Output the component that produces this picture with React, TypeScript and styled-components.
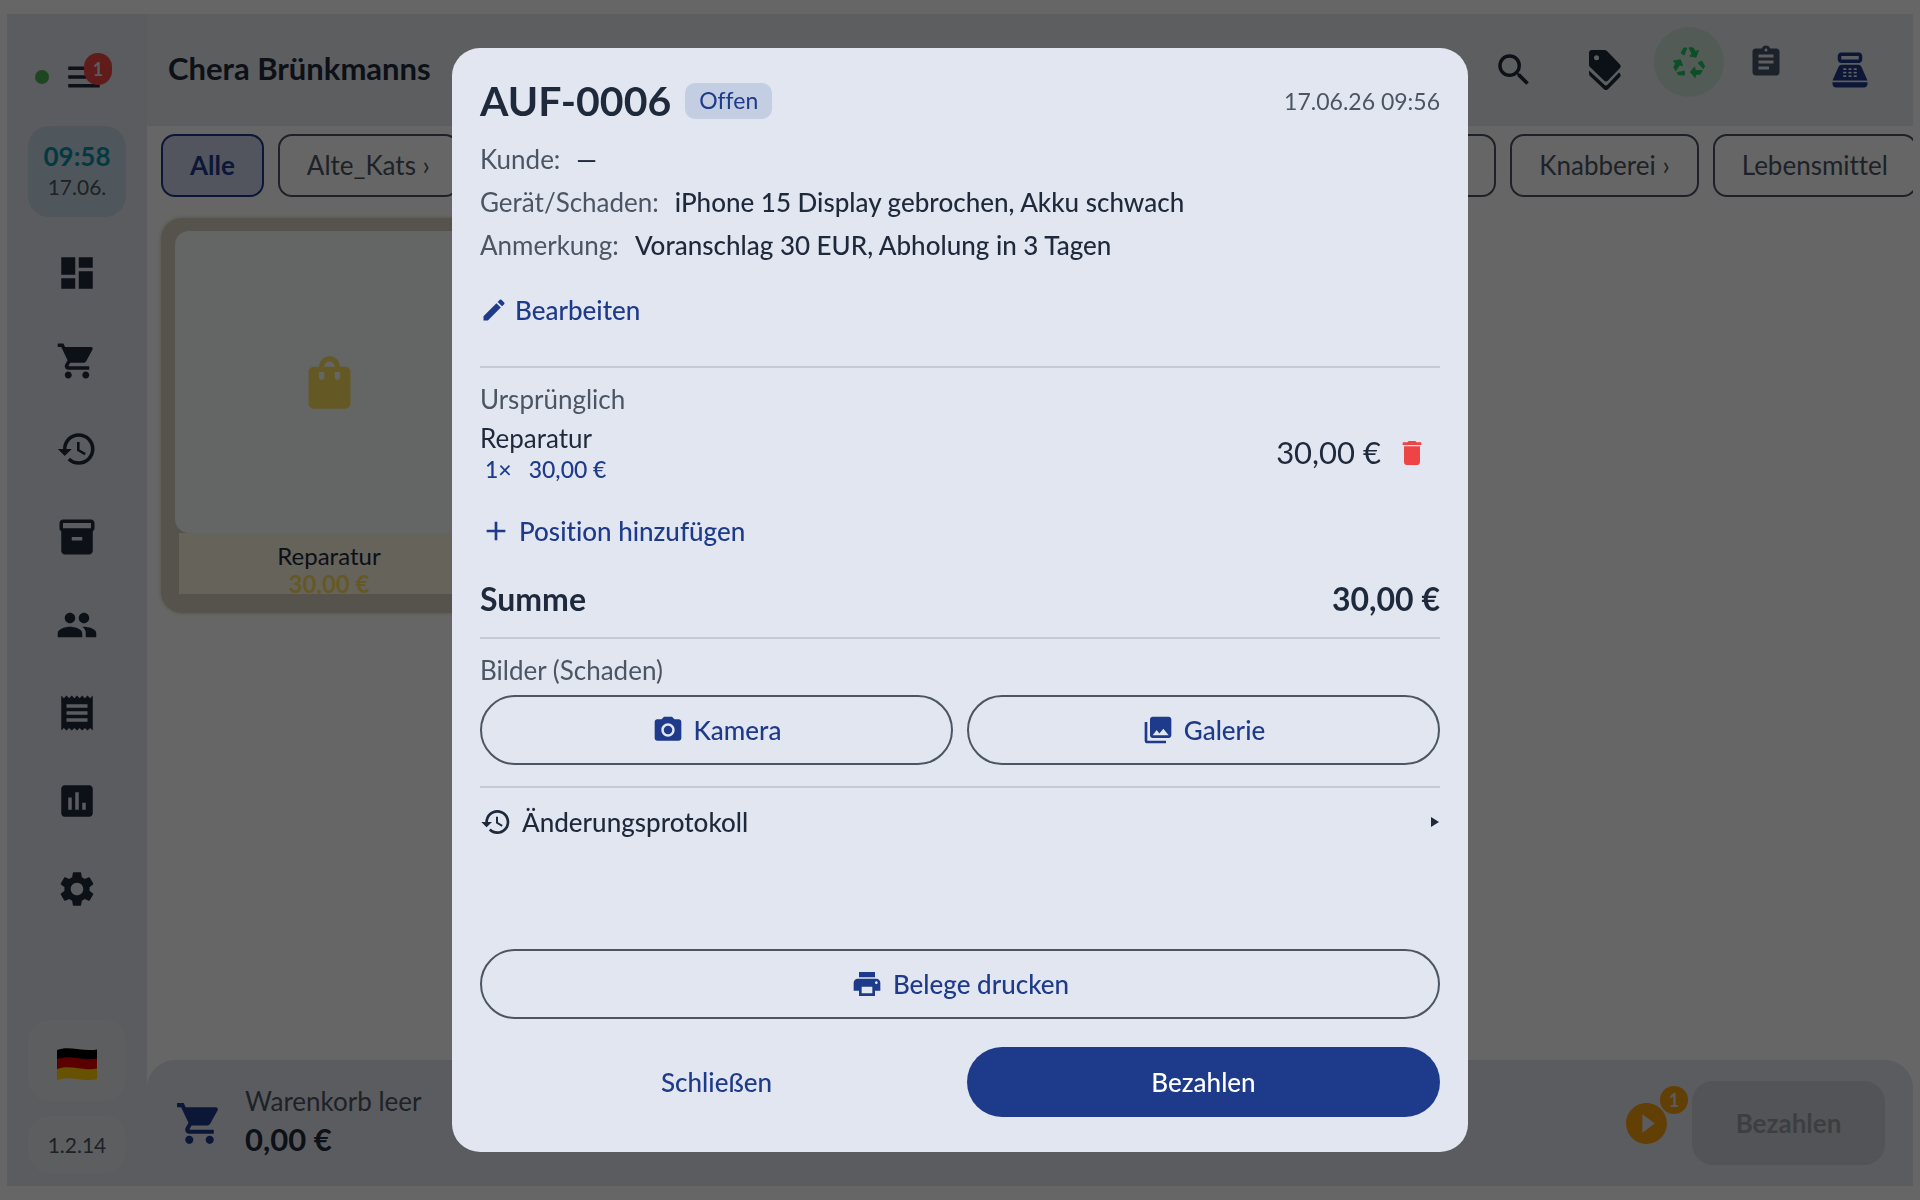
import React from "react";
import styled, { createGlobalStyle } from "styled-components";
import {
  MdAdd, MdAssignment, MdDashboard, MdDelete, MdEdit, MdHistory, MdInsertChart, MdInventory2, MdMenu,
  MdPeople, MdPhotoCamera, MdPhotoLibrary, MdPlayCircleFilled, MdPointOfSale, MdPrint, MdReceipt,
  MdSearch, MdSettings, MdShoppingBag, MdShoppingCart,
} from "react-icons/md";

const c = {
  ink: "#1e293b",
  muted: "#4b5563",
  primary: "#1e3a8a",
  surface: "#e2e6f1",
  rail: "#e3e5ee",
  bar: "#e8eaf0",
  danger: "#ef4444",
  amber: "#f59e0b",
};

const GlobalStyle = createGlobalStyle`
  *, *::before, *::after { box-sizing: border-box; }
  body {
    margin: 0;
    background: #fff;
    color: ${c.ink};
    font-family: Lato, "Open Sans", sans-serif;
    font-size: 26px;
    font-variant-ligatures: none;
  }
  button {
    border: 0;
    margin: 0;
    padding: 0;
    background: none;
    color: inherit;
    font: inherit;
    font-variant-ligatures: none;
    cursor: pointer;
  }
  h1, h2, h3, p, dl, dd, ul { margin: 0; padding: 0; font-weight: inherit; font-size: inherit; }
  svg { display: block; flex: none; }
`;

const Shell = styled.div`
  height: 100vh;
  min-height: 1000px;
  padding: 14px 7px;
  display: flex;
  overflow: hidden;
`;

/* Side rail */
const Rail = styled.nav`
  flex: none;
  width: 140px;
  background: ${c.rail};
  padding: 14px 0 13px;
  display: flex;
  flex-direction: column;
  align-items: center;
`;
const MenuRow = styled.div`
  height: 98px;
  padding-right: 14px;
  display: flex;
  align-items: center;
  gap: 14px;
`;
const OnlineDot = styled.span`
  width: 14px;
  height: 14px;
  border-radius: 50%;
  background: #4caf50;
`;
const BadgeButton = styled.button`
  position: relative;
  display: block;
`;
const Badge = styled.span<{ $tone: string }>`
  position: absolute;
  display: grid;
  place-items: center;
  border-radius: 16px;
  background: ${p => p.$tone};
  color: ${c.rail};
  font-size: 18px;
  font-weight: 700;
`;
const MenuBadge = styled(Badge)`
  top: -3px;
  right: -7px;
  width: 28px;
  height: 32px;
`;
const ParkedBadge = styled(Badge)`
  top: -13px;
  right: -17px;
  width: 28px;
  height: 28px;
`;
const Clock = styled.div`
  width: 98px;
  height: 91px;
  padding-bottom: 4px;
  border-radius: 21px;
  background: #c9dae6;
  display: flex;
  flex-direction: column;
  align-items: center;
  justify-content: center;
  color: ${c.muted};
  font-size: 21px;
  line-height: 28px;
`;
const Time = styled.strong`
  color: #0891a5;
  font-size: 26px;
  line-height: 34px;
`;
const NavList = styled.ul`
  list-style: none;
  margin-top: 12px;
  flex: 1;
`;
const NavButton = styled.button`
  width: 98px;
  height: 88px;
  display: grid;
  place-items: center;
`;
const RailTile = styled.div<{ $h: number }>`
  width: 98px;
  height: ${p => p.$h}px;
  margin-top: 15px;
  border-radius: 21px;
  background: ${c.bar};
  display: grid;
  place-items: center;
  color: ${c.muted};
  font-size: 21px;
`;

/* Main column */
const Main = styled.main`
  flex: 1;
  min-width: 0;
  display: flex;
  flex-direction: column;
`;
const TopBar = styled.header`
  height: 112px;
  padding: 0 21px;
  background: ${c.bar};
  display: flex;
  align-items: center;
  gap: 7px;
`;
const ShopName = styled.h1`
  flex: 1;
  padding-bottom: 4px;
  font-size: 31px;
  font-weight: 700;
`;
const ToolButton = styled.button<{ $blue?: boolean }>`
  width: 84px;
  height: 84px;
  display: grid;
  place-items: center;
  color: ${p => (p.$blue ? c.primary : c.ink)};
`;
const QuickTools = styled.div`
  margin-bottom: 16px;
  display: flex;
  gap: 7px;
`;
const RoundTool = styled.button<{ $green?: boolean }>`
  width: 70px;
  height: 70px;
  border-radius: 50%;
  display: grid;
  place-items: center;
  background: ${p => (p.$green ? "#cfe3da" : "transparent")};
  color: ${p => (p.$green ? "#22c55e" : "#475569")};
`;
const Categories = styled.div`
  padding: 8px 0 0 14px;
  display: flex;
  gap: 14px;
  overflow: hidden;
`;
const Chip = styled.button<{ $active?: boolean; $last?: boolean }>`
  flex: none;
  height: 63px;
  padding: 0 27px 2px;
  border: 2px solid ${p => (p.$active ? c.primary : c.muted)};
  border-radius: 14px;
  background: ${p => (p.$active ? "#cdd3ea" : "transparent")};
  color: ${p => (p.$active ? c.primary : c.muted)};
  font-weight: ${p => (p.$active ? 700 : 400)};
  white-space: nowrap;
  margin-right: ${p => (p.$last ? "-4px" : 0)};
`;
const ChipGap = styled.span`
  flex: 1;
`;
const Products = styled.section`
  flex: 1;
  padding: 21px 14px;
`;
const Product = styled.button`
  display: block;
  width: 336px;
  padding: 13px 14px 19px;
  border-radius: 21px;
  background: #d4cfbe;
  box-shadow: 0 0 4px #d4cfbe;
`;
const ProductImage = styled.span`
  height: 302px;
  border-radius: 14px;
  background: #fbfcfd;
  color: #fadf5e;
  display: grid;
  place-items: center;
`;
const ProductText = styled.span`
  display: block;
  height: 61px;
  margin: 0 4px;
  padding-top: 9px;
  overflow: hidden;
  background: #fff8e4;
  font-size: 24px;
  line-height: 28px;
`;
const ProductPrice = styled.strong`
  display: block;
  color: #fadf5e;
`;
const CartBar = styled.footer`
  height: 126px;
  padding: 0 28px;
  border-radius: 28px 28px 0 0;
  background: ${c.rail};
  display: flex;
  align-items: center;
  gap: 21px;
  color: ${c.primary};
`;
const CartText = styled.div`
  flex: 1;
  padding-bottom: 6px;
  color: ${c.muted};
  line-height: 38px;
`;
const CartTotal = styled.strong`
  display: block;
  color: ${c.ink};
  font-size: 31px;
`;
const ParkedButton = styled(BadgeButton)`
  color: ${c.amber};
`;
const PayDisabled = styled.button`
  width: 193px;
  height: 84px;
  border-radius: 21px;
  background: #cfd1d9;
  color: #9a9ca5;
  font-weight: 700;
`;

/* Order dialog */
const Scrim = styled.div`
  position: fixed;
  inset: 0;
  padding: 48px 28px;
  background: rgba(0, 0, 0, 0.6);
  display: flex;
  justify-content: center;
`;
const Dialog = styled.div`
  width: 100%;
  max-width: 1016px;
  padding: 28px 28px 35px;
  border-radius: 28px;
  background: ${c.surface};
  display: flex;
  flex-direction: column;
  overflow: auto;
`;
const DialogHead = styled.header`
  display: flex;
  align-items: center;
  gap: 14px;
`;
const OrderNo = styled.h2`
  font-size: 41px;
  line-height: 49px;
  font-weight: 700;
`;
const Status = styled.span`
  height: 36px;
  padding: 0 14px;
  border-radius: 10px;
  background: #c3cee2;
  color: ${c.primary};
  font-size: 23px;
  line-height: 34px;
`;
const Stamp = styled.time`
  margin-left: auto;
  color: ${c.muted};
  font-size: 23px;
`;
const Facts = styled.dl`
  margin-top: 14px;
`;
const Fact = styled.div`
  display: flex;
  gap: 16px;
  line-height: 41px;
  height: 43px;
`;
const FactName = styled.dt`
  color: ${c.muted};
`;
const FactValue = styled.dd`
  font-weight: 500;
`;
const TextButton = styled.button`
  align-self: flex-start;
  height: 56px;
  margin-top: 14px;
  display: flex;
  align-items: center;
  gap: 7px;
  color: ${c.primary};
  font-weight: 500;
`;
const Rule = styled.hr<{ $gap: number }>`
  flex: none;
  width: 100%;
  height: 2px;
  margin: ${p => p.$gap}px 0 13px;
  border: 0;
  background: #c6c8d4;
`;
const SectionTitle = styled.h3`
  line-height: 36px;
  color: ${c.muted};
`;
const Item = styled.div`
  height: 72px;
  display: flex;
  align-items: center;
`;
const ItemText = styled.div`
  flex: 1;
  line-height: 32px;
`;
const ItemFields = styled.div`
  display: flex;
  gap: 7px;
  font-size: 23px;
  line-height: 30px;
  color: ${c.primary};
`;
const FieldButton = styled.button`
  padding: 0 5px;
  font-weight: 500;
`;
const ItemPrice = styled.span`
  padding: 0 3px 3px 0;
  font-size: 31px;
`;
const DeleteButton = styled.button`
  width: 56px;
  height: 56px;
  display: grid;
  place-items: center;
  color: ${c.danger};
`;
const Total = styled.div`
  margin-top: 19px;
  padding-bottom: 3px;
  display: flex;
  justify-content: space-between;
  font-size: 32px;
  line-height: 42px;
  font-weight: 700;
`;
const ButtonRow = styled.div<{ $gap: number }>`
  margin-top: ${p => p.$gap}px;
  display: grid;
  grid-template-columns: 1fr 1fr;
  gap: 14px;
`;
const Pill = styled.button<{ $kind?: "outline" | "plain" | "solid" }>`
  height: 70px;
  border: ${p => (p.$kind === "outline" ? `2px solid ${c.muted}` : 0)};
  border-radius: 35px;
  background: ${p => (p.$kind === "solid" ? c.primary : "transparent")};
  color: ${p => (p.$kind === "solid" ? "#fff" : c.primary)};
  display: flex;
  align-items: center;
  justify-content: center;
  gap: 10px;
  font-weight: 500;
`;
const LogButton = styled.button`
  height: 42px;
  display: flex;
  align-items: center;
  gap: 10px;
  font-weight: 500;
`;
const LogLabel = styled.span`
  flex: 1;
  text-align: left;
`;
const DialogFoot = styled.footer`
  margin-top: auto;
  display: flex;
  flex-direction: column;
`;

const TagsIcon = () => (
  <svg width="42" height="42" viewBox="0 0 42 42" fill="currentColor" aria-hidden="true">
    <path
      fillRule="evenodd"
      d="M5 4a3 3 0 0 1 3-3h12a4 4 0 0 1 3 1l13 13.500a2.500 2.500 0 0 1 0 3.500L24 31.500a3 3 0 0 1-4 0L6 18a3 3 0 0 1-1-2.500ZM12.500 6.200a2.500 2.500 0 1 0 0 5 2.500 2.500 0 0 0 0-5Z"
    />
    <path d="M5 21.500v3.500a3 3 0 0 0 1 2L20 40.200a3 3 0 0 0 4 0L36 28a2.600 2.600 0 0 0 0-3.400l-1-1L23.200 36a1.800 1.800 0 0 1-2.500 0Z" />
  </svg>
);

const RecycleIcon = () => (
  <svg width="32" height="32" viewBox="-16 -17 32 32" fill="currentColor" stroke="currentColor" strokeLinejoin="round" aria-hidden="true">
    {[0, 120, 240].map(angle => (
      <g key={angle} transform={`rotate(${angle})`}>
        <path d="M-5-15h2.600L-4.800-8-8-10Z" />
        <path d="M0-15.200h4L6.500-11.500l3-1L7-5.800.8-7 3.200-9Z" />
      </g>
    ))}
  </svg>
);

const FlagDE = () => (
  <svg width="40" height="38" viewBox="0 -6 40 38" role="img" aria-label="Deutschland">
    <path fill="#000" d="M0 2C6-.500 13 0 20 1s14 1.500 20 .500V12H0Z" />
    <path fill="#e00000" d="M0 11c6-2 13-2 20-1s14 2 20 .500V22H0Z" />
    <path fill="#ffcc00" d="M0 21c6-2.500 13-2 20-1s14 2 20 .500V31c-6 1.500-13 1-20 0s-14-1-20 1Z" />
  </svg>
);

const nav = [
  { label: "Übersicht", Icon: MdDashboard },
  { label: "Verkauf", Icon: MdShoppingCart },
  { label: "Verlauf", Icon: MdHistory },
  { label: "Lager", Icon: MdInventory2 },
  { label: "Kunden", Icon: MdPeople },
  { label: "Belege", Icon: MdReceipt },
  { label: "Berichte", Icon: MdInsertChart },
  { label: "Einstellungen", Icon: MdSettings },
];

const facts = [
  ["Kunde:", "—"],
  ["Gerät/Schaden:", "iPhone 15 Display gebrochen, Akku schwach"],
  ["Anmerkung:", "Voranschlag 30 EUR, Abholung in 3 Tagen"],
];

export default function App() {
  return (
    <>
      <GlobalStyle />
      <Shell>
        <Rail>
          <MenuRow>
            <OnlineDot />
            <BadgeButton aria-label="Menü">
              <MdMenu size={42} />
              <MenuBadge $tone={c.danger}>1</MenuBadge>
            </BadgeButton>
          </MenuRow>
          <Clock>
            <Time>09:58</Time>
            <span>17.06.</span>
          </Clock>
          <NavList>
            {nav.map(({ label, Icon }) => (
              <li key={label}>
                <NavButton aria-label={label}><Icon size={42} /></NavButton>
              </li>
            ))}
          </NavList>
          <RailTile $h={81}><FlagDE /></RailTile>
          <RailTile $h={57}>1.2.14</RailTile>
        </Rail>
        <Main>
          <TopBar>
            <ShopName>Chera Brünkmanns</ShopName>
            <ToolButton aria-label="Suchen"><MdSearch size={42} /></ToolButton>
            <ToolButton aria-label="Preise"><TagsIcon /></ToolButton>
            <QuickTools>
              <RoundTool $green aria-label="Pfand"><RecycleIcon /></RoundTool>
              <RoundTool aria-label="Aufträge"><MdAssignment size={36} /></RoundTool>
            </QuickTools>
            <ToolButton $blue aria-label="Kasse"><MdPointOfSale size={42} /></ToolButton>
          </TopBar>
          <Categories>
            <Chip $active>Alle</Chip>
            <Chip>Alte_Kats ›</Chip>
            <ChipGap />
            <Chip>Getränke ›</Chip>
            <Chip>Knabberei ›</Chip>
            <Chip $last>Lebensmittel</Chip>
          </Categories>
          <Products>
            <Product>
              <ProductImage><MdShoppingBag size={63} /></ProductImage>
              <ProductText>
                Reparatur
                <ProductPrice>30,00 €</ProductPrice>
              </ProductText>
            </Product>
          </Products>
          <CartBar>
            <MdShoppingCart size={49} />
            <CartText>
              Warenkorb leer
              <CartTotal>0,00 €</CartTotal>
            </CartText>
            <ParkedButton aria-label="Geparkte Aufträge">
              <MdPlayCircleFilled size={49} />
              <ParkedBadge $tone={c.amber}>1</ParkedBadge>
            </ParkedButton>
            <PayDisabled disabled>Bezahlen</PayDisabled>
          </CartBar>
        </Main>
      </Shell>
      <Scrim>
        <Dialog role="dialog" aria-modal="true" aria-labelledby="order-no">
          <DialogHead>
            <OrderNo id="order-no">AUF-0006</OrderNo>
            <Status>Offen</Status>
            <Stamp>17.06.26 09:56</Stamp>
          </DialogHead>
          <Facts>
            {facts.map(([name, value]) => (
              <Fact key={name}>
                <FactName>{name}</FactName>
                <FactValue>{value}</FactValue>
              </Fact>
            ))}
          </Facts>
          <TextButton><MdEdit size={28} />Bearbeiten</TextButton>
          <Rule $gap={28} />
          <SectionTitle>Ursprünglich</SectionTitle>
          <Item>
            <ItemText>
              Reparatur
              <ItemFields>
                <FieldButton>1×</FieldButton>
                <FieldButton>30,00 €</FieldButton>
              </ItemFields>
            </ItemText>
            <ItemPrice>30,00 €</ItemPrice>
            <DeleteButton aria-label="Position löschen"><MdDelete size={32} /></DeleteButton>
          </Item>
          <TextButton><MdAdd size={32} />Position hinzufügen</TextButton>
          <Total>
            <span>Summe</span>
            <span>30,00 €</span>
          </Total>
          <Rule $gap={14} />
          <SectionTitle>Bilder (Schaden)</SectionTitle>
          <ButtonRow $gap={7}>
            <Pill $kind="outline"><MdPhotoCamera size={32} />Kamera</Pill>
            <Pill $kind="outline"><MdPhotoLibrary size={32} />Galerie</Pill>
          </ButtonRow>
          <Rule $gap={21} />
          <LogButton aria-expanded="false">
            <MdHistory size={32} />
            <LogLabel>Änderungsprotokoll</LogLabel>
            <svg width="10" height="10" viewBox="0 0 10 10" fill="currentColor" aria-hidden="true">
              <path d="M1 0 9 5 1 10Z" />
            </svg>
          </LogButton>
          <DialogFoot>
            <Pill $kind="outline"><MdPrint size={32} />Belege drucken</Pill>
            <ButtonRow $gap={28}>
              <Pill $kind="plain">Schließen</Pill>
              <Pill $kind="solid">Bezahlen</Pill>
            </ButtonRow>
          </DialogFoot>
        </Dialog>
      </Scrim>
    </>
  );
}
